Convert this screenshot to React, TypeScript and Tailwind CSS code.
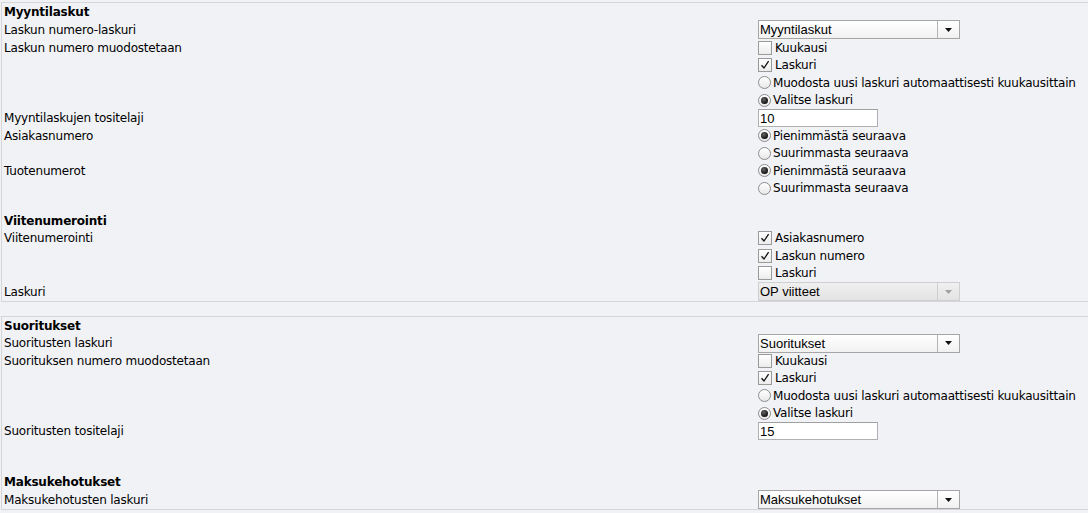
import type { ReactNode } from "react"

type Row = {
  label?: string
  heading?: boolean
  h: string
  control?: ReactNode
}

function Checkbox({ checked, label }: { checked?: boolean; label: string }) {
  return (
    <div className="flex items-center">
      <span className="flex h-[14px] w-[14px] items-center justify-center border border-[#9a9a9a] bg-gradient-to-b from-white to-[#ececec]">
        {checked && (
          <svg width="10" height="10" viewBox="0 0 10 10">
            <path d="M1.5 5.2 L4 8 L8.6 1.2" fill="none" stroke="#111" strokeWidth="1.3" />
          </svg>
        )}
      </span>
      <span className="ml-[3px]">{label}</span>
    </div>
  )
}

function Radio({ checked, label }: { checked?: boolean; label: string }) {
  return (
    <div className="flex items-center">
      <span className="flex h-[13px] w-[13px] items-center justify-center rounded-full border border-[#8c8c8c] bg-gradient-to-b from-white to-[#e8e8e8]">
        {checked && <span className="h-[7px] w-[7px] rounded-full bg-[radial-gradient(circle_at_40%_35%,#666,#111_70%)]" />}
      </span>
      <span className="ml-[2px]">{label}</span>
    </div>
  )
}

function Select({ value, disabled }: { value: string; disabled?: boolean }) {
  return (
    <div
      className={`flex h-[19px] w-[202px] items-stretch border font-['Liberation_Sans',Arial,sans-serif] text-[13px] tracking-normal ${
        disabled
          ? "border-[#cfcfcf] bg-gradient-to-b from-[#f0f0f0] to-[#e3e3e3]"
          : "border-[#a6a6a6] bg-gradient-to-b from-white to-[#f1f1f1]"
      }`}
    >
      <span className="flex flex-1 items-center pl-[1px] leading-none">{value}</span>
      <span
        className={`flex w-[22px] items-center justify-center border-l ${
          disabled ? "border-[#cfcfcf]" : "border-[#b4b4b4]"
        }`}
      >
        <svg width="7" height="4" viewBox="0 0 7 4">
          <path d="M0 0 H7 L3.5 4 Z" fill={disabled ? "#a0a0a0" : "#111"} />
        </svg>
      </span>
    </div>
  )
}

function Input({ value }: { value: string }) {
  return (
    <div className="flex h-[18px] w-[120px] items-center border border-[#b0b0b0] border-t-[#a0a0a0] bg-white pl-[1px] font-['Liberation_Sans',Arial,sans-serif] text-[13px] leading-none tracking-normal">
      {value}
    </div>
  )
}

const section1: Row[] = [
  { heading: true, label: "Myyntilaskut", h: "h-[17px]" },
  { label: "Laskun numero-laskuri", h: "h-[19px]", control: <Select value="Myyntilaskut" /> },
  { label: "Laskun numero muodostetaan", h: "h-[17.5px]", control: <Checkbox label="Kuukausi" /> },
  { h: "h-[17.5px]", control: <Checkbox checked label="Laskuri" /> },
  { h: "h-[17.5px]", control: <Radio label="Muodosta uusi laskuri automaattisesti kuukausittain" /> },
  { h: "h-[17.5px]", control: <Radio checked label="Valitse laskuri" /> },
  { label: "Myyntilaskujen tositelaji", h: "h-[18px]", control: <Input value="10" /> },
  { label: "Asiakasnumero", h: "h-[17.5px]", control: <Radio checked label="Pienimmästä seuraava" /> },
  { h: "h-[17.5px]", control: <Radio label="Suurimmasta seuraava" /> },
  { label: "Tuotenumerot", h: "h-[17.5px]", control: <Radio checked label="Pienimmästä seuraava" /> },
  { h: "h-[17.5px]", control: <Radio label="Suurimmasta seuraava" /> },
  { h: "h-[15.5px]" },
  { heading: true, label: "Viitenumerointi", h: "h-[17px]" },
  { label: "Viitenumerointi", h: "h-[17.5px]", control: <Checkbox checked label="Asiakasnumero" /> },
  { h: "h-[17.5px]", control: <Checkbox checked label="Laskun numero" /> },
  { h: "h-[17.5px]", control: <Checkbox label="Laskuri" /> },
  { label: "Laskuri", h: "h-[19px]", control: <Select value="OP viitteet" disabled /> },
]

const section2: Row[] = [
  { heading: true, label: "Suoritukset", h: "h-[17px]" },
  { label: "Suoritusten laskuri", h: "h-[18px]", control: <Select value="Suoritukset" /> },
  { label: "Suorituksen numero muodostetaan", h: "h-[17.5px]", control: <Checkbox label="Kuukausi" /> },
  { h: "h-[17.5px]", control: <Checkbox checked label="Laskuri" /> },
  { h: "h-[17.5px]", control: <Radio label="Muodosta uusi laskuri automaattisesti kuukausittain" /> },
  { h: "h-[17.5px]", control: <Radio checked label="Valitse laskuri" /> },
  { label: "Suoritusten tositelaji", h: "h-[18px]", control: <Input value="15" /> },
  { h: "h-[33px]" },
  { heading: true, label: "Maksukehotukset", h: "h-[17px]" },
  { label: "Maksukehotusten laskuri", h: "h-[19px]", control: <Select value="Maksukehotukset" /> },
]

function Section({ rows }: { rows: Row[] }) {
  return (
    <div className="border-y border-l border-[#d6d6d8] pl-[2px]">
      {rows.map((r, i) => (
        <div key={i} className={`flex items-center ${r.h}`}>
          <div className={`w-[754px] shrink-0 ${r.heading ? "font-bold" : ""}`}>{r.label}</div>
          <div className="flex-1">{r.control}</div>
        </div>
      ))}
    </div>
  )
}

export default function App() {
  return (
    <div className="min-h-[513px] bg-[#f1f2f6] pl-px pt-[2px] font-['DejaVu_Sans',Verdana,sans-serif] text-[12px] tracking-[-0.2px] text-black">
      <Section rows={section1} />
      <div className="h-[14px]" />
      <Section rows={section2} />
    </div>
  )
}
